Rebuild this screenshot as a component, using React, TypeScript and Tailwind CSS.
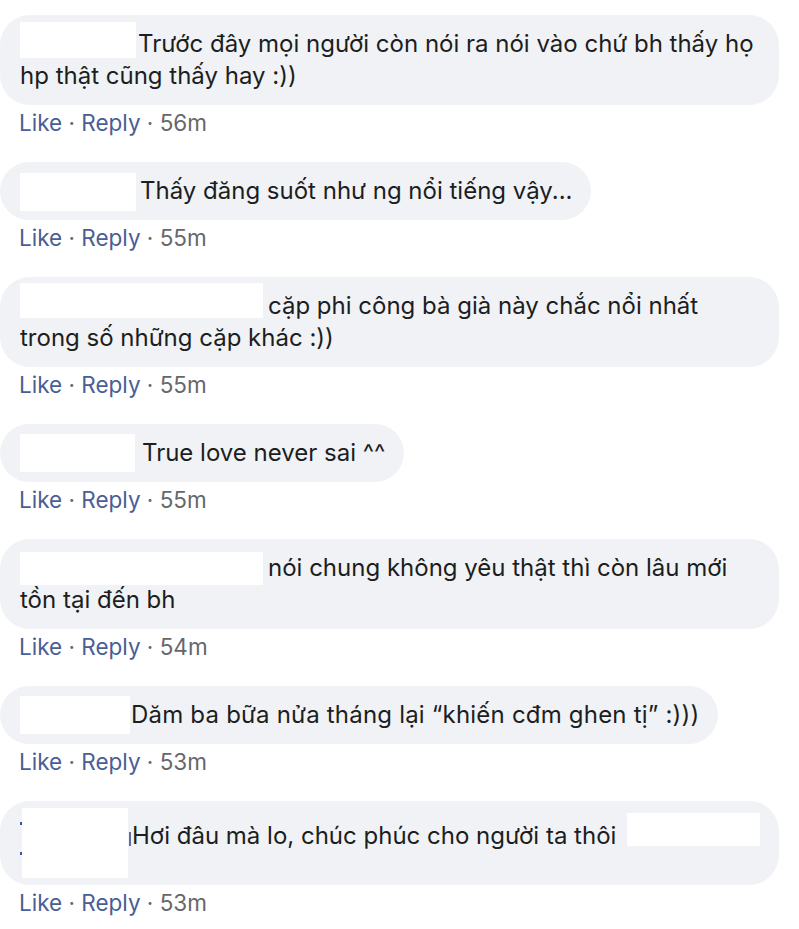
import React from "react";

type Comment = {
  name: React.ReactNode;
  lines: React.ReactNode;
  time: string;
  wide?: boolean;
  extra?: string;
};

// white block that hides the commenter's name; sits on the first line
const NameBox = ({
  w,
  h = 34,
  lift = 0,
  gap = 2,
}: {
  w: number;
  h?: number;
  lift?: number;
  gap?: number;
}) => (
  <span
    className="inline-block bg-white align-top"
    style={{
      width: w,
      height: h,
      marginTop: -lift,
      marginBottom: -(h - 32 - lift),
      marginRight: gap,
    }}
  />
);

const comments: Comment[] = [
  {
    name: <NameBox w={116} h={36} lift={6} gap={2} />,
    lines: (
      <>
        Trước đây mọi người còn nói ra nói vào chứ bh thấy họ
        <br />
        hp thật cũng thấy hay :))
      </>
    ),
    time: "56m",
    wide: true,
  },
  {
    name: <NameBox w={116} h={38} lift={2} gap={4} />,
    lines: <>Thấy đăng suốt như ng nổi tiếng vậy...</>,
    time: "55m",
  },
  {
    name: <NameBox w={243} h={35} lift={7} gap={5} />,
    lines: (
      <>
        cặp phi công bà già này chắc nổi nhất
        <br />
        trong số những cặp khác :))
      </>
    ),
    time: "55m",
    wide: true,
  },
  {
    name: <NameBox w={115} h={38} lift={3} gap={7} />,
    lines: <>True love never sai ^^</>,
    time: "55m",
  },
  {
    name: <NameBox w={243} h={33} lift={0} gap={5} />,
    lines: (
      <>
        nói chung không yêu thật thì còn lâu mới
        <br />
        tồn tại đến bh
      </>
    ),
    time: "54m",
    wide: true,
  },
  {
    name: <NameBox w={110} h={38} lift={3} gap={1} />,
    lines: <>Dăm ba bữa nửa tháng lại “khiến cđm ghen tị” :)))</>,
    time: "53m",
    extra: "tracking-[0.2px]",
  },
];

const Actions = ({ time }: { time: string }) => (
  <div className="mt-1 mb-[25px] h-7 pl-[19px] text-[22.5px] leading-7">
    <span className="text-[#4a5e96]">Like</span>
    <span className="text-[#65676b]"> · </span>
    <span className="text-[#4a5e96]">Reply</span>
    <span className="text-[#65676b]"> · {time}</span>
  </div>
);

export default function App() {
  return (
    <div className="min-h-screen w-[799px] bg-white pt-[15px] font-['Inter','Liberation_Sans',sans-serif] text-[#1c1e21]">
      {comments.map((c, i) => (
        <div key={i}>
          <div
            className={
              "rounded-[30px] bg-[#f0f2f5] py-[13px] pl-[20px] pr-[19px] text-[24px] leading-8 " +
              (c.wide ? "w-[779px]" : "w-fit") +
              (c.extra ? " " + c.extra : "")
            }
          >
            {c.name}
            {c.lines}
          </div>
          <Actions time={c.time} />
        </div>
      ))}

      {/* last comment with tall name block */}
      <div className="flex w-[779px] items-start rounded-[30px] bg-[#f0f2f5] py-[7px] pl-[22px] text-[24px] leading-8">
        <span className="relative h-[70px] w-[106px] shrink-0 bg-white">
          <span className="absolute -left-[2px] top-[14px] h-[3px] w-[2px] bg-[#385898]" />
          <span className="absolute -left-[2px] top-[44px] h-[3px] w-[2px] bg-[#385898]" />
        </span>
        <span className="ml-[1px] mt-[24px] h-[14px] w-[2px] shrink-0 bg-[#5a6ea0]" />
        <span className="ml-[1px] mt-[12px]">Hơi đâu mà lo, chúc phúc cho người ta thôi</span>
        <span className="ml-auto mr-[19px] mt-[5px] h-[33px] w-[133px] bg-white" />
      </div>
      <Actions time="53m" />
    </div>
  );
}
